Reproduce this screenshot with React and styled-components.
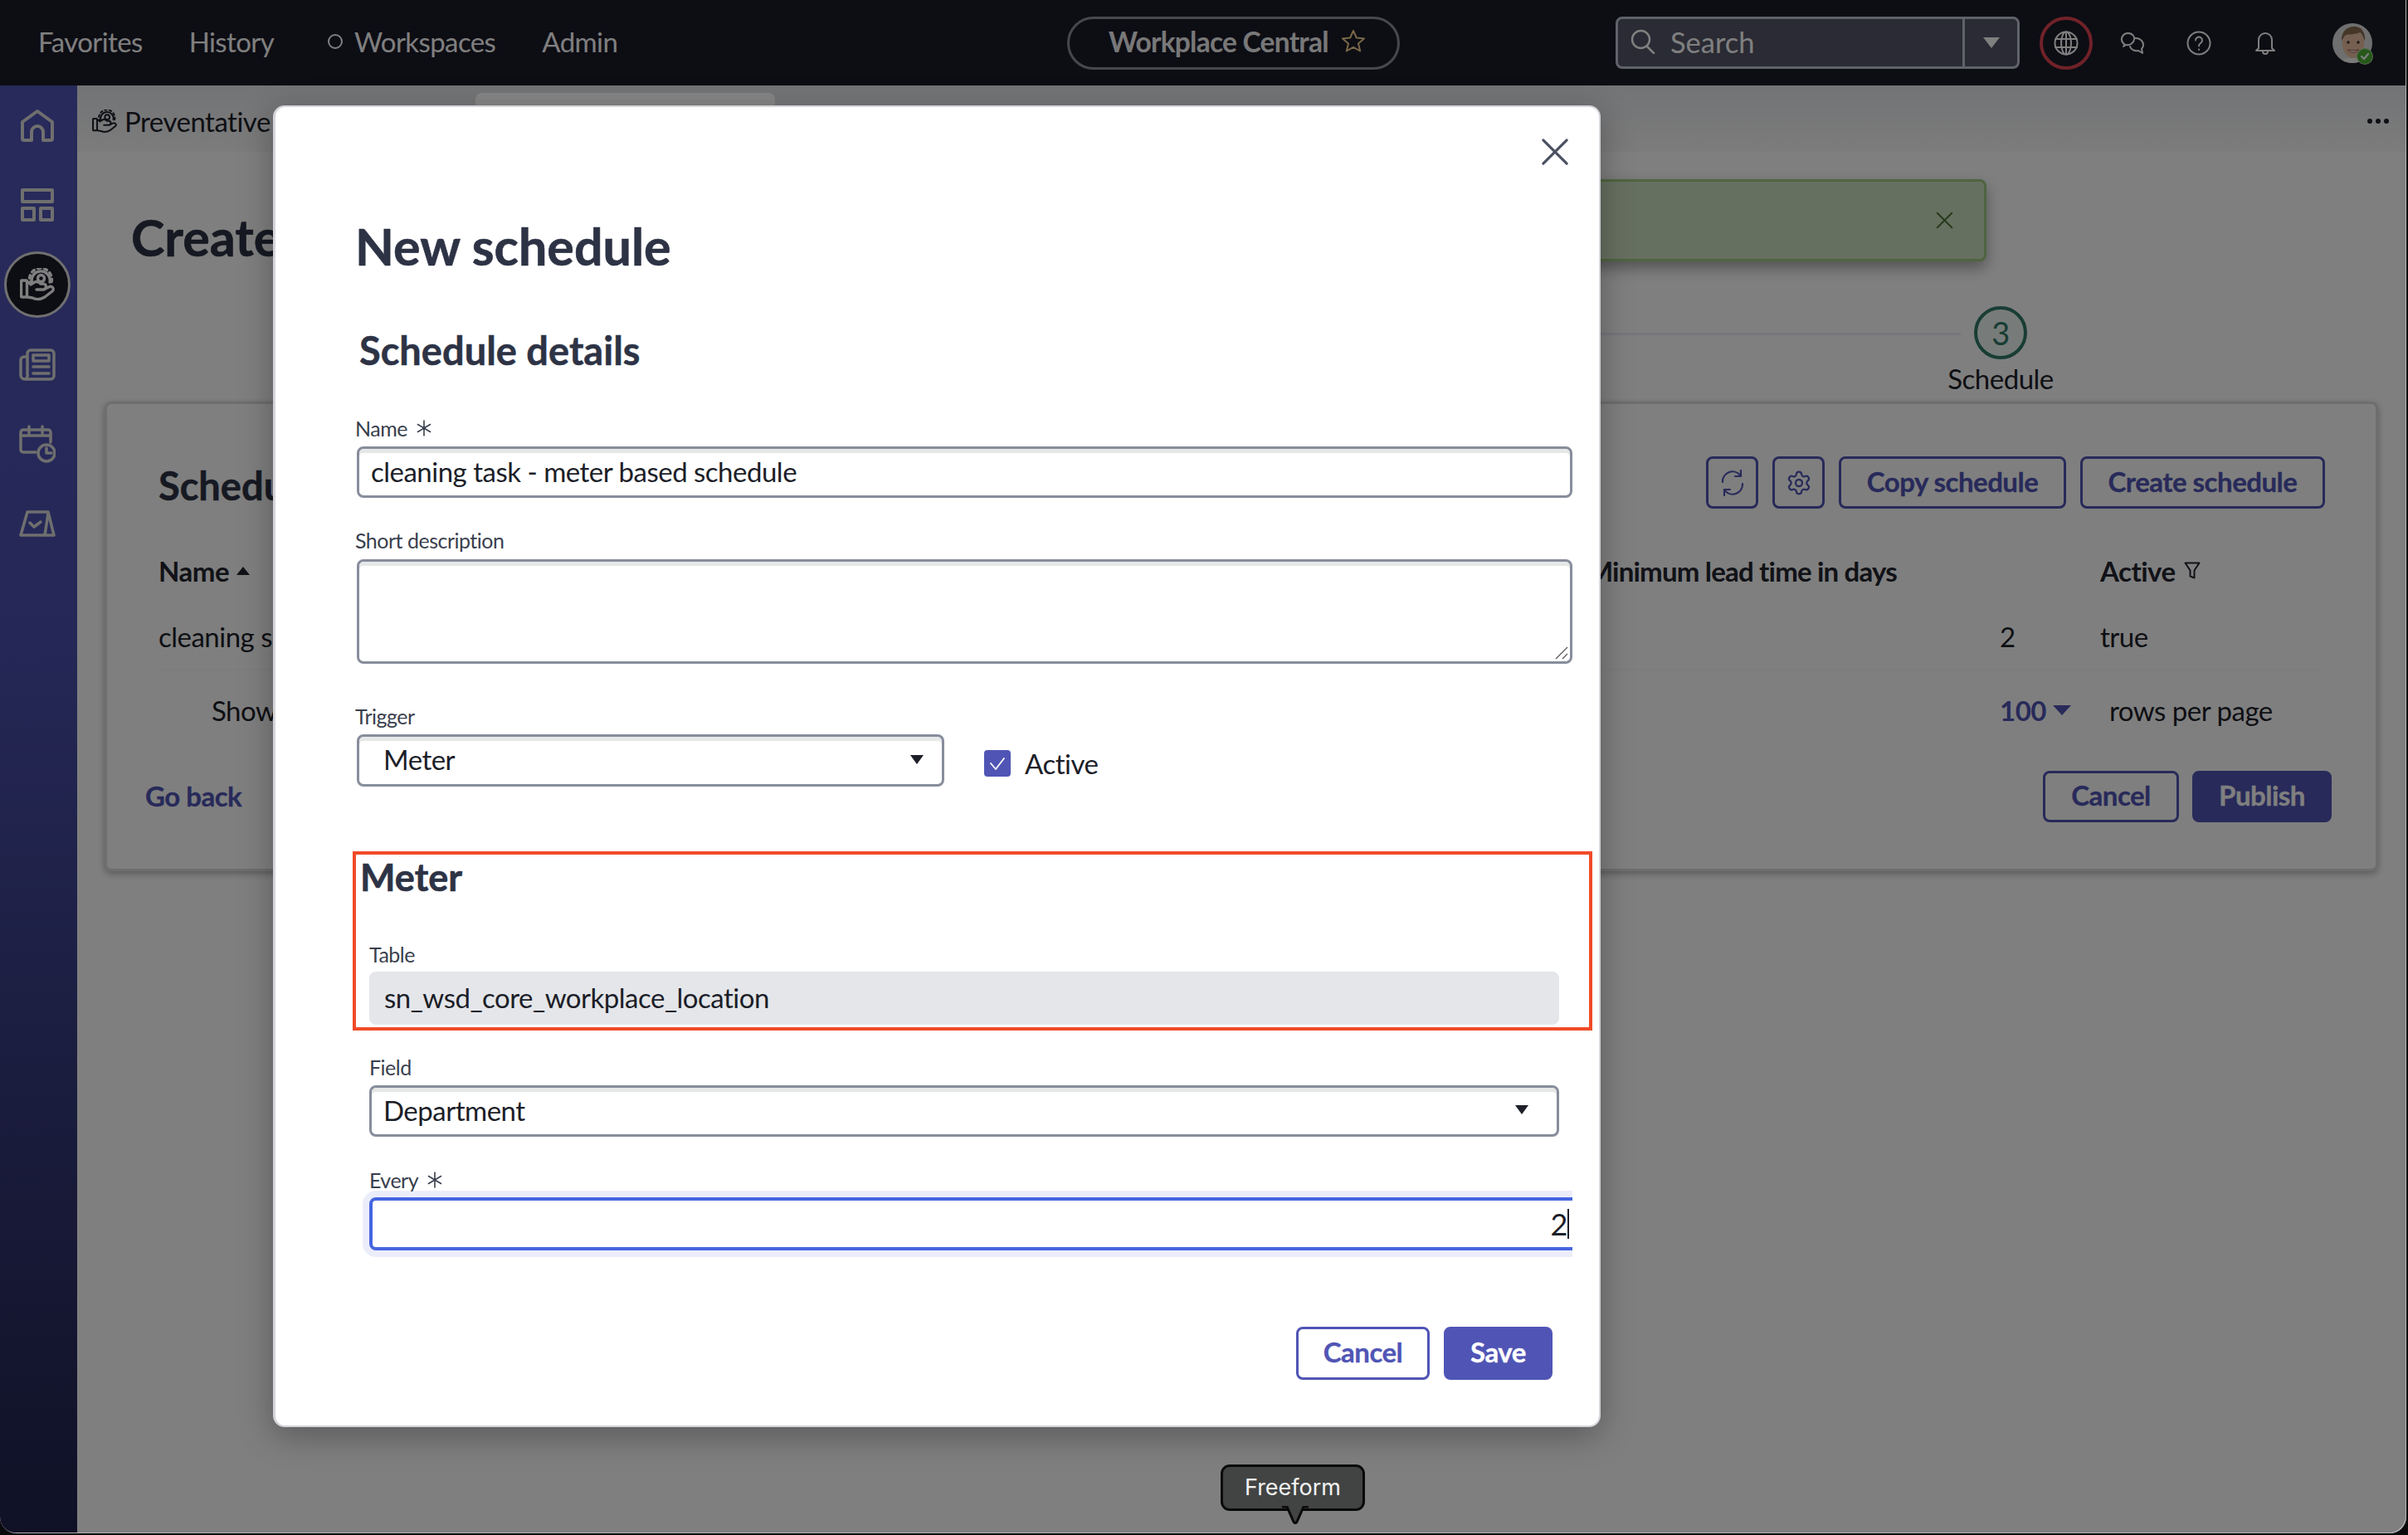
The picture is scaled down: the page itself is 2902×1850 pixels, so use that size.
import React from "react";
import styled, { createGlobalStyle } from "styled-components";
import { Settings } from "lucide-react";

const Global = createGlobalStyle`
  html, body { margin: 0; padding: 0; background: #0a0a0c; }
  body { font-family: Lato, "Liberation Sans", sans-serif; color: #2d3345; letter-spacing: -0.5px; }
  * { box-sizing: border-box; }
`;

const BLUE = "#5055b5";
const INK = "#2d3345";

const Page = styled.div`
  position: relative;
  width: 2900px;
  height: 1848px;
  overflow: hidden;
  display: flex;
  flex-direction: column;
  background: #fff;
  border-radius: 0 0 20px 20px;
`;

/* ---------- top bar ---------- */
const TopBar = styled.header`
  height: 103px;
  flex: none;
  background: #1a1a28;
  display: grid;
  grid-template-columns: 1286px 401px 1fr;
  align-items: center;
  color: #fff;
`;
const NavList = styled.nav`
  display: flex;
  align-items: center;
  gap: 56px;
  padding: 0 0 3px 46px;
  font-size: 33px;
  letter-spacing: -0.6px;
`;
const NavItem = styled.span`
  display: inline-flex;
  align-items: center;
  gap: 14px;
  margin-left: ${(p) => p.$shift || 0}px;
`;
const Dot = styled.i`
  width: 18px;
  height: 18px;
  border: 2.5px solid #fff;
  border-radius: 50%;
`;
const AppPill = styled.div`
  height: 64px;
  border: 3px solid #8e8e98;
  border-radius: 32px;
  display: flex;
  align-items: center;
  padding: 0 0 3px 47px;
  gap: 15px;
  font-weight: 700;
  font-size: 33.5px;
  letter-spacing: -0.75px;
  color: #f0f0f0;
`;
const RightTools = styled.div`
  display: flex;
  align-items: center;
  padding-left: 260px;
`;
const SearchBox = styled.div`
  width: 487px;
  height: 63px;
  display: flex;
  align-items: center;
  background: #545668;
  border: 3px solid #c0c4d4;
  border-radius: 8px;
  color: #fff;
  font-size: 34.5px;
  letter-spacing: 0;
`;
const SearchInner = styled.div`
  width: 418px;
  height: 100%;
  display: flex;
  align-items: center;
  gap: 18px;
  padding: 0 0 3px 15px;
  border-right: 3px solid #c0c4d4;
`;
const SearchCaret = styled.div`
  flex: 1;
  display: flex;
  justify-content: center;
`;
const Tri = styled.i`
  display: block;
  width: 0;
  height: 0;
  border-left: ${(p) => p.$w / 2}px solid transparent;
  border-right: ${(p) => p.$w / 2}px solid transparent;
  border-top: ${(p) => p.$h}px solid ${(p) => p.$c};
`;
const TriUp = styled(Tri)`
  transform: rotate(180deg);
`;
const GlobeRing = styled.div`
  width: 64px;
  height: 64px;
  margin-left: 24px;
  margin-right: 8px;
  border: 4px solid #e04450;
  border-radius: 50%;
  display: flex;
  align-items: center;
  justify-content: center;
`;
const ToolSlot = styled.div`
  width: 80px;
  display: flex;
  justify-content: center;
`;
const Avatar = styled.div`
  position: relative;
  width: 48px;
  height: 48px;
  margin-left: 41px;
`;
const AvatarBadge = styled.div`
  position: absolute;
  right: 0;
  bottom: -1px;
  width: 18px;
  height: 18px;
  border-radius: 50%;
  background: #4cb032;
  box-shadow: 0 0 0 1px #a8d89c;
  display: flex;
  align-items: center;
  justify-content: center;
`;

/* ---------- body ---------- */
const Body = styled.div`
  flex: 1;
  display: flex;
  min-height: 0;
`;
const SideBar = styled.aside`
  width: 93px;
  flex: none;
  padding-right: 3px;
  background: linear-gradient(180deg, #4f55b5 0%, #4c52b0 36%, #20234c 100%);
  display: flex;
  flex-direction: column;
  align-items: center;
`;
const SideSlot = styled.div`
  height: 96px;
  width: 100%;
  display: flex;
  align-items: center;
  justify-content: center;
`;
const SideActive = styled.div`
  width: 80px;
  height: 80px;
  border-radius: 50%;
  background: #1a1a28;
  border: 3px solid #e0e0e0;
  display: flex;
  align-items: center;
  justify-content: center;
`;
const Main = styled.main`
  flex: 1;
  min-width: 0;
  display: flex;
  flex-direction: column;
`;
const TabBar = styled.div`
  height: 80px;
  flex: none;
  display: flex;
  align-items: center;
  justify-content: space-between;
  padding: 6px 21px 0 18px;
  background: linear-gradient(180deg, #e6e8ec 0%, #f8f8f8 100%);
`;
const Tab = styled.div`
  display: flex;
  align-items: center;
  gap: 9px;
  font-size: 33px;
  color: #1c1e28;
`;
const MoreDots = styled.div`
  display: flex;
  gap: 4px;
`;
const MoreDot = styled.i`
  width: 6px;
  height: 6px;
  border-radius: 50%;
  background: #1c1e28;
`;
const Content = styled.div`
  position: relative;
  flex: 1;
  padding: 65px 34px 0 33px;
`;
const PageTitle = styled.h1`
  margin: 0 0 0 32px;
  font-size: 61px;
  line-height: 76px;
  font-weight: 700;
  letter-spacing: 0;
  -webkit-text-stroke: 0.6px ${INK};
  color: ${INK};
`;
const Alert = styled.div`
  position: absolute;
  top: 33px;
  right: 506px;
  width: 1600px;
  height: 99px;
  background: #cce0c0;
  border: 3px solid #9ec880;
  border-radius: 8px;
  box-shadow: 0 8px 18px rgba(0, 0, 0, 0.35);
  display: flex;
  align-items: center;
  justify-content: flex-end;
  padding-right: 37px;
`;
const Stepper = styled.div`
  margin-top: 45px;
  display: flex;
  justify-content: flex-end;
  padding-right: 380px;
`;
const StepLine = styled.div`
  width: 1000px;
  height: 3px;
  margin: 32px -27px 0 0;
  background: #eeecfa;
`;
const Step = styled.div`
  width: 150px;
  display: flex;
  flex-direction: column;
  align-items: center;
`;
const StepCircle = styled.div`
  width: 64px;
  height: 64px;
  border: 4px solid #327a68;
  border-radius: 50%;
  background: #eef8f4;
  color: #327a68;
  font-size: 38px;
  display: flex;
  align-items: center;
  justify-content: center;
`;
const StepLabel = styled.div`
  padding-top: 3px;
  font-size: 33px;
  line-height: 40px;
  color: #1c1e28;
`;
const Card = styled.section`
  margin-top: 8px;
  height: 566px;
  border: 3px solid #dcdcdc;
  border-radius: 8px;
  background: #fff;
  box-shadow: 0 3px 8px rgba(0, 0, 0, 0.3);
  padding: 63px 61px 0 62px;
`;
const CardTools = styled.div`
  height: 63px;
  display: flex;
  align-items: center;
  gap: 17px;
`;
const CardTitle = styled.h2`
  margin: 0 auto 0 0;
  padding-top: 6px;
  font-size: 47px;
  font-weight: 700;
  letter-spacing: 0;
  -webkit-text-stroke: 0.5px ${INK};
  color: ${INK};
`;
const OutlineBtn = styled.button`
  height: ${(p) => p.$h || 63}px;
  width: ${(p) => p.$w}px;
  flex: none;
  padding: 0 0 4px;
  border: 3px solid ${BLUE};
  border-radius: 8px;
  background: #fff;
  color: ${BLUE};
  font: 700 33px Lato, "Liberation Sans", sans-serif;
  letter-spacing: -0.5px;
  -webkit-text-stroke: 0.3px ${BLUE};
  display: inline-flex;
  align-items: center;
  justify-content: center;
`;
const IconBtn = styled(OutlineBtn)`
  padding: 0;
  -webkit-text-stroke: 0;
`;
const SolidBtn = styled(OutlineBtn)`
  background: ${BLUE};
  color: #fff;
  -webkit-text-stroke: 0.3px #fff;
`;
const THead = styled.div`
  height: 60px;
  margin-top: 46px;
  padding-bottom: 3px;
  display: flex;
  align-items: center;
  font-size: 33px;
  font-weight: 700;
  color: #22242e;
`;
const NameHead = styled.div`
  flex: 1;
  display: flex;
  align-items: center;
  gap: 9px;
`;
const LeadHead = styled.div`
  margin-right: 245px;
  letter-spacing: -0.8px;
`;
const ActiveCol = styled.div`
  width: 271px;
  display: flex;
  align-items: center;
  gap: 10px;
`;
const TRow = styled.div`
  height: 89px;
  padding-top: 9px;
  display: flex;
  align-items: center;
  font-size: 33px;
  color: #1c1e28;
  border-bottom: 2px solid #fafafa;
`;
const RowName = styled.div`
  flex: 1;
`;
const RowNum = styled.div`
  width: 121px;
`;
const Pager = styled.div`
  height: 96px;
  display: flex;
  align-items: center;
  font-size: 33px;
  color: #1c1e28;
  padding-left: 64px;
`;
const PagerLabel = styled.div`
  flex: 1;
`;
const PagerCount = styled.div`
  width: 132px;
  display: flex;
  align-items: center;
  gap: 8px;
  font-weight: 700;
  color: ${BLUE};
`;
const PagerUnit = styled.div`
  width: 260px;
`;
const CardFoot = styled.div`
  margin: 25px -8px 0 -16px;
  display: flex;
  align-items: center;
  gap: 16px;
`;
const GoBack = styled.span`
  margin-right: auto;
  padding-bottom: 3px;
  font-size: 33px;
  font-weight: 700;
  color: ${BLUE};
  -webkit-text-stroke: 0.3px ${BLUE};
`;

/* ---------- modal layer ---------- */
const Backdrop = styled.div`
  position: absolute;
  inset: 0;
  background: rgba(0, 0, 0, 0.5);
  border-radius: 0 0 20px 20px;
  box-shadow: inset -1px -1px 0 #b4b4b4;
`;
const GhostTab = styled.div`
  position: absolute;
  left: 573px;
  top: 112px;
  width: 361px;
  height: 24px;
  background: #868686;
  border-radius: 8px 8px 0 0;
`;
const Modal = styled.div`
  position: absolute;
  left: 329px;
  top: 127px;
  width: 1600px;
  height: 1593px;
  background: #fff;
  border-radius: 14px;
  border: 2px solid #d4d4da;
  border-left-width: 3px;
  box-shadow: 0 10px 40px rgba(0, 0, 0, 0.3);
  padding: 130px 0 0 96px;
`;
const CloseBtn = styled.div`
  position: absolute;
  left: 1525px;
  top: 37px;
  width: 34px;
  height: 36px;
`;
const ModalTitle = styled.h2`
  margin: 0;
  font-size: 61px;
  line-height: 76px;
  font-weight: 700;
  letter-spacing: 0;
  -webkit-text-stroke: 0.6px ${INK};
  color: ${INK};
`;
const SectionTitle = styled.h3`
  margin: 57px 0 0 5px;
  font-size: 47px;
  line-height: 60px;
  font-weight: 700;
  letter-spacing: 0;
  -webkit-text-stroke: 0.5px ${INK};
  color: ${INK};
`;
const Form = styled.div`
  width: 1467px;
`;
const Label = styled.label`
  display: flex;
  align-items: center;
  gap: 10px;
  height: 30px;
  margin: ${(p) => p.$top}px 0 ${(p) => p.$bottom ?? 7}px ${(p) => p.$left || 0}px;
  font-size: 25px;
  line-height: 30px;
  color: #3a3f4e;
`;
const Control = styled.div`
  position: relative;
  width: ${(p) => p.$w || 1465}px;
  height: ${(p) => p.$h || 62}px;
  margin-left: ${(p) => p.$left ?? 2}px;
  border: 3px solid #878d9c;
  border-radius: 8px;
  background: #fff;
  box-shadow: inset 0 5px 0 #e6e8e8;
  padding: 0 ${(p) => p.$pr || 34}px 3px ${(p) => p.$pl || 14}px;
  display: flex;
  align-items: center;
  justify-content: space-between;
  font-size: 33px;
  color: #1c1e28;
`;
const Grip = styled.svg`
  position: absolute;
  right: 2px;
  bottom: 2px;
`;
const TriggerRow = styled.div`
  display: flex;
  align-items: center;
`;
const Check = styled.span`
  width: 32px;
  height: 32px;
  margin: 6px 17px 0 48px;
  border-radius: 4px;
  background: ${BLUE};
  display: flex;
  align-items: center;
  justify-content: center;
`;
const CheckLabel = styled.span`
  margin-top: 6px;
  font-size: 33px;
  color: #1c1e28;
`;
const Highlight = styled.section`
  width: 1494px;
  height: 216px;
  margin: 78px 0 0 -3px;
  border: 4px solid #f04b28;
  padding: 7px 0 0 5px;
`;
const MeterTitle = styled.h3`
  margin: 0;
  font-size: 45px;
  line-height: 40px;
  font-weight: 700;
  letter-spacing: 0;
  -webkit-text-stroke: 0.6px ${INK};
  color: ${INK};
`;
const ReadOnly = styled.div`
  width: 1434px;
  height: 64px;
  margin-left: 11px;
  border-radius: 8px;
  background: #e4e6ea;
  padding: 0 0 3px 18px;
  display: flex;
  align-items: center;
  font-size: 33px;
  color: #1c1e28;
`;
const ClipRow = styled.div`
  width: 1467px;
  padding: 8px 0 8px 9px;
  margin-top: -8px;
  overflow: hidden;
`;
const FocusInput = styled.div`
  width: 1488px;
  height: 64px;
  margin-left: 8px;
  border: 4px solid #4565e0;
  border-radius: 8px;
  box-shadow: 0 0 0 8px #ecedfb;
  padding-right: 38px;
  display: flex;
  align-items: center;
  justify-content: flex-end;
  font-size: 36px;
  color: #1c1e28;
`;
const TextCaret = styled.i`
  width: 2px;
  height: 36px;
  background: #1c1e28;
`;
const ModalActions = styled.div`
  margin: 84px 0 0 0;
  width: 1443px;
  display: flex;
  justify-content: flex-end;
  gap: 17px;
`;
const Tooltip = styled.div`
  position: absolute;
  left: 1471px;
  top: 1765px;
  width: 174px;
  height: 56px;
  padding-bottom: 2px;
  background: #424443;
  border: 3px solid #0a0a0a;
  border-radius: 11px;
  color: #f4f4f4;
  font: 400 27px Inter, "Liberation Sans", sans-serif;
  letter-spacing: 0;
  display: flex;
  align-items: center;
  justify-content: center;
`;
const TooltipTail = styled.svg`
  position: absolute;
  left: 67px;
  top: 47px;
`;

/* ---------- icons ---------- */
const Ico = ({ w, h, vb, c = "#fff", sw = 4, children }) => (
  <svg width={w} height={h} viewBox={vb} fill="none" stroke={c} strokeWidth={sw} strokeLinecap="round" strokeLinejoin="round">
    {children}
  </svg>
);
const SIDE = "#dedede";
const HandGear = ({ w = 42, h = 40, c = "#fff", sw = 3.4 }) => (
  <Ico w={w} h={h} vb="0 0 42 40" c={c} sw={sw}>
    <rect x="1.500" y="15" width="7" height="20" rx="1" />
    <path d="M9 18h7c3-2 6-2 9 1h3a3.500 3.500 0 0 1 0 7h-8M28 26l7-3a3 3 0 0 1 4 5l-9 7c-5 3-11 3-15 1l-6-1" />
    <path d="M15 19A11 11 0 1 1 36 17" />
    <path d="M13 20A13.500 13.500 0 1 1 38 17" strokeDasharray="3.500 4.500" />
    <circle cx="25.500" cy="12.500" r="4" />
  </Ico>
);
const IconHome = () => (
  <Ico w={40} h={39} vb="0 0 40 39" c={SIDE}>
    <path d="M2 35a2 2 0 0 0 2 2h9V27a7 7 0 0 1 14 0v10h9a2 2 0 0 0 2-2V15L20 2 2 15Z" />
  </Ico>
);
const IconLayout = () => (
  <Ico w={40} h={40} vb="0 0 40 40" c={SIDE}>
    <rect x="2" y="2" width="36" height="14" />
    <rect x="2" y="24" width="14" height="14" />
    <rect x="24" y="24" width="14" height="14" />
  </Ico>
);
const IconNews = () => (
  <Ico w={44} h={39} vb="0 0 44 39" c={SIDE} sw={3.500}>
    <path d="M10 10H6a4 4 0 0 0-4 4v18a5 5 0 0 0 5 5h31a4 4 0 0 0 4-4V6a4 4 0 0 0-4-4H14a4 4 0 0 0-4 4v25a5 5 0 0 1-3 6" />
    <rect x="17" y="8" width="19" height="7" />
    <path d="M17 22h19M17 30h19" />
  </Ico>
);
const IconCalendar = () => (
  <Ico w={44} h={46} vb="0 0 44 46" c={SIDE} sw={3.500}>
    <path d="M20 33H5a3 3 0 0 1-3-3V9a3 3 0 0 1 3-3h30a3 3 0 0 1 3 3v12" />
    <path d="M12 2v8M28 2v8M2 13h36" />
    <circle cx="33" cy="34" r="10" />
    <path d="M33 28v6h6" />
  </Ico>
);
const IconInbox = () => (
  <Ico w={44} h={32} vb="0 0 44 32" c={SIDE} sw={3.500}>
    <path d="M10 2h25l7 28H2Z" />
    <path d="M35 4l-4 26" />
    <path d="M13 15l5 5 8-6" />
  </Ico>
);
const IconSearch = () => (
  <Ico w={30} h={30} vb="0 0 30 30" sw={2.500}>
    <circle cx="12.500" cy="12.500" r="10.500" />
    <path d="M20 21l8 8" />
  </Ico>
);
const IconGlobe = () => (
  <Ico w={30} h={30} vb="0 0 30 30" sw={2}>
    <circle cx="15" cy="15" r="13.500" />
    <ellipse cx="15" cy="15" rx="6" ry="13.500" />
    <path d="M15 1.500v27M2 10h26M2 20h26" />
  </Ico>
);
const IconChat = () => (
  <Ico w={30} h={28} vb="0 0 30 28" sw={2}>
    <path d="M6 16C2 13 1 9 3 5.500 6 1 13 1 16 5c2 3 1 7-2 9.500-2 1.500-5 2-7 1.500l-3 2Z" />
    <path d="M18 8c5-.500 10 3 10 8 0 2.500-1 4-2 5l1 5-5-3c-4 1-9-1-10-5" />
  </Ico>
);
const IconHelp = () => (
  <Ico w={30} h={30} vb="0 0 30 30" sw={2}>
    <circle cx="15" cy="15" r="13.500" />
    <path d="M11 11.500a4 4 0 1 1 6 3.500c-1.500 1-2 2-2 3.500M15 22.500v.5" />
  </Ico>
);
const IconBell = () => (
  <Ico w={26} h={32} vb="0 0 26 32" sw={2}>
    <path d="M5 22V12a8 8 0 0 1 16 0v10l3 3H2Z" />
    <path d="M10 26a3 3 0 0 0 6 0" />
  </Ico>
);
const IconStar = () => (
  <Ico w={30} h={30} vb="0 0 30 30" c="#f0d090" sw={2}>
    <path d="M15 2l3.800 8.500 9.200.9-7 6 2.200 9.100L15 21.800 6.800 26.500 9 17.400l-7-6 9.200-.9Z" />
  </Ico>
);
const IconAsterisk = () => (
  <Ico w={20} h={20} vb="0 0 20 20" c="#3a3f4e" sw={1.600}>
    <path d="M10 1v18M2.500 5.500l15 9M17.500 5.500l-15 9" />
  </Ico>
);
const IconX = ({ size, c, sw }) => (
  <Ico w={size} h={size} vb="0 0 24 24" c={c} sw={sw}>
    <path d="M2 2l20 20M22 2L2 22" />
  </Ico>
);
const IconRefresh = () => (
  <Ico w={30} h={32} vb="0 0 30 32" c={BLUE} sw={2.200}>
    <path d="M3 15A12 12 0 0 1 24 6.500M25 1v7h-7" />
    <path d="M27 17A12 12 0 0 1 6 25.500M5 31v-7h7" />
  </Ico>
);
const IconFunnel = () => (
  <Ico w={20} h={22} vb="0 0 20 22" c="#22242e" sw={2}>
    <path d="M1.500 1.500h17l-6 9v9l-5-2v-7Z" />
  </Ico>
);
const Face = () => (
  <svg width="48" height="48" viewBox="0 0 48 48">
    <defs>
      <clipPath id="avatarClip">
        <circle cx="24" cy="24" r="24" />
      </clipPath>
    </defs>
    <g clipPath="url(#avatarClip)">
      <rect width="48" height="48" fill="#dcdedc" />
      <ellipse cx="25" cy="25" rx="13" ry="17" fill="#e8bfa0" />
      <path d="M11 22C10 9 19 3 28 4c8 1 12 8 11 18-2-5-3-9-6-11-6 3-13 2-17 3-2 2-4 5-5 8Z" fill="#8a6c50" />
      <circle cx="19" cy="23" r="1.700" fill="#3a302a" />
      <circle cx="31" cy="23" r="1.700" fill="#3a302a" />
      <path d="M18 32c4 4 10 4 14 0-3 .8-11 .8-14 0Z" fill="#fff" stroke="#a65e4c" strokeWidth="1" />
      <path d="M8 48c2-5 9-6 17-6s15 1 17 6Z" fill="#f4f4f4" />
    </g>
  </svg>
);

export default function App() {
  return (
    <Page>
      <Global />
      <TopBar>
        <NavList>
          <NavItem>Favorites</NavItem>
          <NavItem>History</NavItem>
          <NavItem $shift={9}>
            <Dot />
            Workspaces
          </NavItem>
          <NavItem>Admin</NavItem>
        </NavList>
        <AppPill>
          Workplace Central
          <IconStar />
        </AppPill>
        <RightTools>
          <SearchBox>
            <SearchInner>
              <IconSearch />
              Search
            </SearchInner>
            <SearchCaret>
              <Tri $w={20} $h={13} $c="#fff" />
            </SearchCaret>
          </SearchBox>
          <GlobeRing>
            <IconGlobe />
          </GlobeRing>
          <ToolSlot>
            <IconChat />
          </ToolSlot>
          <ToolSlot>
            <IconHelp />
          </ToolSlot>
          <ToolSlot>
            <IconBell />
          </ToolSlot>
          <Avatar>
            <Face />
            <AvatarBadge>
              <Ico w={12} h={12} vb="0 0 12 12" sw={2.200}>
                <path d="M2 6l3 3 5-6" />
              </Ico>
            </AvatarBadge>
          </Avatar>
        </RightTools>
      </TopBar>

      <Body>
        <SideBar>
          <SideSlot><IconHome /></SideSlot>
          <SideSlot><IconLayout /></SideSlot>
          <SideSlot>
            <SideActive><HandGear /></SideActive>
          </SideSlot>
          <SideSlot><IconNews /></SideSlot>
          <SideSlot><IconCalendar /></SideSlot>
          <SideSlot><IconInbox /></SideSlot>
        </SideBar>

        <Main>
          <TabBar>
            <Tab>
              <HandGear w={30} h={29} c="#1c1e28" sw={2.800} />
              Preventative
            </Tab>
            <MoreDots>
              <MoreDot />
              <MoreDot />
              <MoreDot />
            </MoreDots>
          </TabBar>
          <Content>
            <PageTitle>Create</PageTitle>
            <Alert>
              <IconX size={21} c="#4a7236" sw={2.200} />
            </Alert>
            <Stepper>
              <StepLine />
              <Step>
                <StepCircle>3</StepCircle>
                <StepLabel>Schedule</StepLabel>
              </Step>
            </Stepper>
            <Card>
              <CardTools>
                <CardTitle>Schedules</CardTitle>
                <IconBtn $w={63}><IconRefresh /></IconBtn>
                <IconBtn $w={63}><Settings size={32} strokeWidth={1.700} /></IconBtn>
                <OutlineBtn $w={274}>Copy schedule</OutlineBtn>
                <OutlineBtn $w={295}>Create schedule</OutlineBtn>
              </CardTools>
              <THead>
                <NameHead>
                  Name
                  <TriUp $w={17} $h={10} $c="#22242e" />
                </NameHead>
                <LeadHead>Minimum lead time in days</LeadHead>
                <ActiveCol>
                  Active
                  <IconFunnel />
                </ActiveCol>
              </THead>
              <TRow>
                <RowName>cleaning schedule</RowName>
                <RowNum>2</RowNum>
                <ActiveCol>true</ActiveCol>
              </TRow>
              <Pager>
                <PagerLabel>Show</PagerLabel>
                <PagerCount>
                  100
                  <Tri $w={22} $h={12} $c={BLUE} />
                </PagerCount>
                <PagerUnit>rows per page</PagerUnit>
              </Pager>
              <CardFoot>
                <GoBack>Go back</GoBack>
                <OutlineBtn $w={164} $h={62}>Cancel</OutlineBtn>
                <SolidBtn $w={168} $h={62}>Publish</SolidBtn>
              </CardFoot>
            </Card>
          </Content>
        </Main>
      </Body>

      <Backdrop />
      <GhostTab />

      <Modal>
        <CloseBtn>
          <IconX size={34} c="#4a5060" sw={2.200} />
        </CloseBtn>
        <ModalTitle>New schedule</ModalTitle>
        <SectionTitle>Schedule details</SectionTitle>
        <Form>
          <Label $top={49}>
            Name
            <IconAsterisk />
          </Label>
          <Control>cleaning task - meter based schedule</Control>
          <Label $top={36} $bottom={8}>Short description</Label>
          <Control $h={126}>
            <Grip width="16" height="16" viewBox="0 0 16 16" fill="none" stroke="#555" strokeWidth="1.200">
              <path d="M1 15L15 1M9 15l6-6" />
            </Grip>
          </Control>
          <Label $top={48}>Trigger</Label>
          <TriggerRow>
            <Control $w={708} $h={63} $pl={29} $pr={22}>
              Meter
              <Tri $w={17} $h={11} $c="#1c1e28" />
            </Control>
            <Check>
              <Ico w={22} h={22} vb="0 0 22 22" sw={1.800}>
                <path d="M3 11l6 7 10-13" />
              </Ico>
            </Check>
            <CheckLabel>Active</CheckLabel>
          </TriggerRow>
          <Highlight>
            <MeterTitle>Meter</MeterTitle>
            <Label $top={58} $bottom={6} $left={11}>Table</Label>
            <ReadOnly>sn_wsd_core_workplace_location</ReadOnly>
          </Highlight>
          <Label $top={29} $left={17}>Field</Label>
          <Control $w={1434} $left={17} $pl={14}>
            Department
            <Tri $w={17} $h={11} $c="#1c1e28" />
          </Control>
          <Label $top={37} $left={17} $bottom={6}>
            Every
            <IconAsterisk />
          </Label>
          <ClipRow>
            <FocusInput>
              2
              <TextCaret />
            </FocusInput>
          </ClipRow>
        </Form>
        <ModalActions>
          <OutlineBtn $w={161} $h={64}>Cancel</OutlineBtn>
          <SolidBtn $w={131} $h={64}>Save</SolidBtn>
        </ModalActions>
      </Modal>

      <Tooltip>
        Freeform
        <TooltipTail width="40" height="24" viewBox="0 0 40 24">
          <path d="M4 1h6l8 18c1 2 3 2 4 0l8-18h6" fill="#424443" stroke="#0a0a0a" strokeWidth="3" />
        </TooltipTail>
      </Tooltip>
    </Page>
  );
}
